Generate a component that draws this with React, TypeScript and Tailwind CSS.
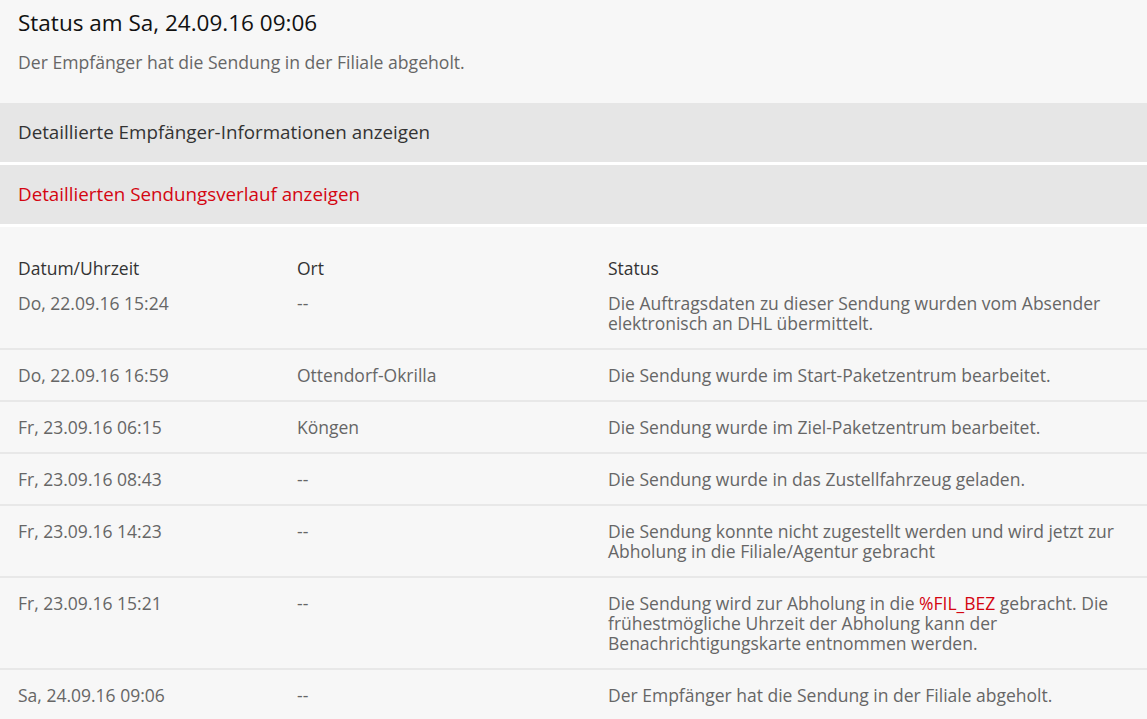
const rows: { date: string; place: string; status: React.ReactNode }[] = [
  {
    date: 'Do, 22.09.16 15:24',
    place: '--',
    status: 'Die Auftragsdaten zu dieser Sendung wurden vom Absender elektronisch an DHL übermittelt.',
  },
  { date: 'Do, 22.09.16 16:59', place: 'Ottendorf-Okrilla', status: 'Die Sendung wurde im Start-Paketzentrum bearbeitet.' },
  { date: 'Fr, 23.09.16 06:15', place: 'Köngen', status: 'Die Sendung wurde im Ziel-Paketzentrum bearbeitet.' },
  { date: 'Fr, 23.09.16 08:43', place: '--', status: 'Die Sendung wurde in das Zustellfahrzeug geladen.' },
  {
    date: 'Fr, 23.09.16 14:23',
    place: '--',
    status: 'Die Sendung konnte nicht zugestellt werden und wird jetzt zur Abholung in die Filiale/Agentur gebracht',
  },
  {
    date: 'Fr, 23.09.16 15:21',
    place: '--',
    status: (
      <>
        Die Sendung wird zur Abholung in die <span className="text-[#d40511]">%FIL_BEZ</span> gebracht. Die
        frühestmögliche Uhrzeit der Abholung kann der Benachrichtigungskarte entnommen werden.
      </>
    ),
  },
  { date: 'Sa, 24.09.16 09:06', place: '--', status: 'Der Empfänger hat die Sendung in der Filiale abgeholt.' },
]

export default function App() {
  return (
    <div className="min-h-[719px] w-[1147px] overflow-hidden bg-[#f7f7f7] font-['Open_Sans',sans-serif]">
      <div className="px-[18px] pt-[8px] pb-[30px]">
        <h2 className="text-[22.5px] leading-[30px] text-[#111]">Status am Sa, 24.09.16 09:06</h2>
        <p className="mt-[13px] text-[17.6px] leading-[22px] text-[#666]">
          Der Empfänger hat die Sendung in der Filiale abgeholt.
        </p>
      </div>
      <div className="flex flex-col gap-[3px] border-b-[3px] border-white bg-white">
        <div className="flex h-[59px] items-center bg-[#e6e6e6] px-[18px] text-[18.8px] text-[#333]">
          Detaillierte Empfänger-Informationen anzeigen
        </div>
        <div className="flex h-[59px] items-center bg-[#e6e6e6] px-[18px] text-[18.8px] text-[#d40511]">
          Detaillierten Sendungsverlauf anzeigen
        </div>
      </div>
      <table className="w-full border-collapse text-left text-[17.5px] leading-[20px]">
        <colgroup>
          <col className="w-[297px]" />
          <col className="w-[311px]" />
          <col />
        </colgroup>
        <thead>
          <tr className="text-[#333]">
            <th className="pt-[31px] pb-[7px] pl-[18px] font-normal">Datum/Uhrzeit</th>
            <th className="pt-[31px] pb-[7px] font-normal">Ort</th>
            <th className="pt-[31px] pb-[7px] pr-[18px] font-normal">Status</th>
          </tr>
        </thead>
        <tbody className="text-[#666]">
          {rows.map((r, i) => (
            <tr key={i} className={i === 0 ? '' : 'border-t-2 border-[#e8e8e8]'}>
              <td className={`pl-[18px] align-top ${i === 0 ? 'pt-[8px] pb-[15px]' : 'pt-[15px] pb-[15px]'}`}>{r.date}</td>
              <td className={`align-top ${i === 0 ? 'pt-[8px] pb-[15px]' : 'pt-[15px] pb-[15px]'}`}>{r.place}</td>
              <td className={`pr-[18px] align-top ${i === 0 ? 'pt-[8px] pb-[15px]' : 'pt-[15px] pb-[15px]'}`}>{r.status}</td>
            </tr>
          ))}
        </tbody>
      </table>
    </div>
  )
}
